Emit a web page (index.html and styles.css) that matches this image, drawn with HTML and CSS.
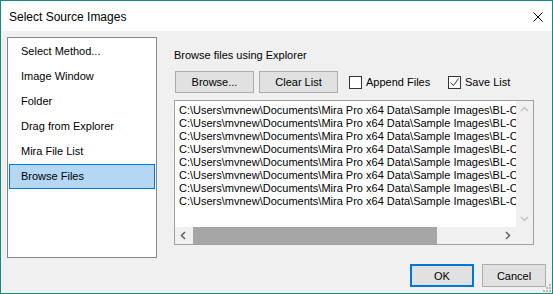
FILE: index.html
```html
<!doctype html>
<html lang="en">

<head>
    <meta charset="UTF-8" />
    <title>Select Source Images</title>
    <link rel="stylesheet" href="styles.css">
</head>

<body>
    <div class="window">
        <!-- Title bar -->
        <div class="titlebar">
            <span class="title">Select Source Images</span>
            <svg class="close" width="10" height="10" viewBox="0 0 10 10">
                <path d="M0.5 0.5 L9.5 9.5 M9.5 0.5 L0.5 9.5" stroke="#000" stroke-width="1" fill="none" />
            </svg>
        </div>

        <div class="dialog">
            <div class="content">
                <!-- Method list -->
                <ul class="methods">
                    <li>Select Method...</li>
                    <li>Image Window</li>
                    <li>Folder</li>
                    <li>Drag from Explorer</li>
                    <li>Mira File List</li>
                    <li class="selected">Browse Files</li>
                </ul>

                <!-- Browse panel -->
                <div class="panel">
                    <div class="panel-label">Browse files using Explorer</div>

                    <div class="toolbar">
                        <button class="btn">Browse...</button>
                        <button class="btn">Clear List</button>
                        <label class="check check-append"><span class="box"></span>Append Files</label>
                        <label class="check"><span class="box">
                                <svg width="11" height="11" viewBox="0 0 11 11">
                                    <path d="M1.5 5.5 L4.5 8.5 L9.5 1.5" stroke="#333" stroke-width="1" fill="none" />
                                </svg>
                            </span>Save List</label>
                    </div>

                    <div class="filelist">
                        <div class="files-view">
                            <div class="files">
                                <div>C:\Users\mvnew\Documents\Mira Pro x64 Data\Sample Images\BL-CAM-01.fts</div>
                                <div>C:\Users\mvnew\Documents\Mira Pro x64 Data\Sample Images\BL-CAM-02.fts</div>
                                <div>C:\Users\mvnew\Documents\Mira Pro x64 Data\Sample Images\BL-CAM-03.fts</div>
                                <div>C:\Users\mvnew\Documents\Mira Pro x64 Data\Sample Images\BL-CAM-04.fts</div>
                                <div>C:\Users\mvnew\Documents\Mira Pro x64 Data\Sample Images\BL-CAM-05.fts</div>
                                <div>C:\Users\mvnew\Documents\Mira Pro x64 Data\Sample Images\BL-CAM-06.fts</div>
                                <div>C:\Users\mvnew\Documents\Mira Pro x64 Data\Sample Images\BL-CAM-07.fts</div>
                                <div>C:\Users\mvnew\Documents\Mira Pro x64 Data\Sample Images\BL-CAM-08.fts</div>
                            </div>
                            <div class="vscroll">
                                <svg class="arrow" width="17" height="17" viewBox="0 0 17 17">
                                    <path d="M5 10 L8.5 6.5 L12 10" stroke="#c2c2c2" stroke-width="1.5" fill="none" />
                                </svg>
                                <svg class="arrow" width="17" height="17" viewBox="0 0 17 17">
                                    <path d="M5 7 L8.5 10.5 L12 7" stroke="#c2c2c2" stroke-width="1.5" fill="none" />
                                </svg>
                            </div>
                        </div>
                        <div class="hscroll">
                            <svg class="arrow" width="17" height="17" viewBox="0 0 17 17">
                                <path d="M10 5 L6.5 8.5 L10 12" stroke="#606060" stroke-width="1.5" fill="none" />
                            </svg>
                            <div class="track"><div class="thumb"></div></div>
                            <svg class="arrow" width="17" height="17" viewBox="0 0 17 17">
                                <path d="M7 5 L10.5 8.5 L7 12" stroke="#606060" stroke-width="1.5" fill="none" />
                            </svg>
                            <div class="corner"></div>
                        </div>
                    </div>
                </div>
            </div>

            <!-- Dialog buttons -->
            <div class="footer">
                <button class="btn btn-default">OK</button>
                <button class="btn">Cancel</button>
            </div>
        </div>

        <svg class="grip" width="8" height="8" viewBox="0 0 8 8">
            <rect x="6" y="0" width="2" height="2" fill="#bcbcbc" />
            <rect x="3" y="3" width="2" height="2" fill="#bcbcbc" />
            <rect x="6" y="3" width="2" height="2" fill="#bcbcbc" />
            <rect x="0" y="6" width="2" height="2" fill="#bcbcbc" />
            <rect x="3" y="6" width="2" height="2" fill="#bcbcbc" />
            <rect x="6" y="6" width="2" height="2" fill="#bcbcbc" />
        </svg>
    </div>
</body>

</html>
```

FILE: styles.css
```css
body {
    margin: 0;
    font-family: 'Liberation Sans', Arial, sans-serif;
    font-size: 11px;
    color: #000;
    background: #f0f0f0;
}

.window {
    position: relative;
    width: 553px;
    height: 294px;
    box-sizing: border-box;
    border: 1px solid #17897a;
    background: #f0f0f0;
    display: flex;
    flex-direction: column;
}

/* Title bar */
.titlebar {
    height: 30px;
    background: #fff;
    display: flex;
    align-items: center;
    justify-content: space-between;
    padding: 0 9px 0 8px;
}

.title {
    font-size: 12px;
    margin-top: 1px;
}

.close {
    display: block;
    margin-top: 1px;
}

.dialog {
    flex: 1;
    display: flex;
    flex-direction: column;
}

.content {
    display: flex;
    height: 221px;
    padding: 6px 0 0 6px;
}

/* Left method list */
.methods {
    list-style: none;
    margin: 0;
    padding: 1px;
    width: 150px;
    height: 221px;
    box-sizing: border-box;
    border: 1px solid #828790;
    background: #fff;
}

.methods li {
    height: 25px;
    line-height: 25px;
    padding-left: 12px;
    box-sizing: border-box;
    white-space: nowrap;
}

.methods li.selected {
    background: #b4d7f3;
    border: 1px solid #0078d7;
    line-height: 23px;
    padding-left: 11px;
}

/* Right panel */
.panel {
    margin-left: 17px;
    display: flex;
    flex-direction: column;
}

.panel-label {
    margin-top: 10px;
    line-height: 16px;
}

.toolbar {
    display: flex;
    align-items: center;
    margin-top: 8px;
    padding-left: 1px;
}

.btn {
    font-family: inherit;
    font-size: 11px;
    color: #000;
    background: #e1e1e1;
    border: 1px solid #adadad;
    height: 22px;
    width: 79px;
    padding: 0;
    margin: 0;
}

.toolbar .btn + .btn {
    margin-left: 5px;
}

.check {
    display: flex;
    align-items: center;
    margin-left: 11px;
}

.check-append {
    width: 99px;
}

.box {
    width: 13px;
    height: 13px;
    box-sizing: border-box;
    border: 1px solid #333;
    background: #fff;
    margin-right: 4px;
    display: flex;
    align-items: center;
    justify-content: center;
}

.box svg {
    display: block;
}

.check-append + .check {
    margin-left: 0;
}

/* File list with scrollbars */
.filelist {
    margin-top: 7px;
    width: 360px;
    height: 145px;
    box-sizing: border-box;
    border: 1px solid #a0a0a0;
    background: #fff;
    display: flex;
    flex-direction: column;
}

.files-view {
    flex: 1;
    display: flex;
    min-height: 0;
}

.files {
    flex: 1;
    overflow: hidden;
    padding: 3px 0 0 4px;
    white-space: nowrap;
    line-height: 13px;
}

.vscroll {
    width: 17px;
    background: #f0f0f0;
    display: flex;
    flex-direction: column;
    justify-content: space-between;
}

.arrow {
    display: block;
    flex: none;
}

.hscroll {
    height: 17px;
    display: flex;
    background: #f0f0f0;
}

.track {
    flex: 1;
    padding: 0 1px;
}

.thumb {
    width: 244px;
    height: 100%;
    background: #a6a6a6;
}

.corner {
    width: 17px;
    background: #f0f0f0;
}

/* Footer */
.footer {
    display: flex;
    justify-content: flex-end;
    padding: 6px 6px 0 0;
}

.footer .btn {
    width: 64px;
    height: 23px;
}

.footer .btn + .btn {
    margin-left: 8px;
}

.btn-default {
    border: 2px solid #0078d7;
}

.grip {
    position: absolute;
    right: 1px;
    bottom: 1px;
}
```
